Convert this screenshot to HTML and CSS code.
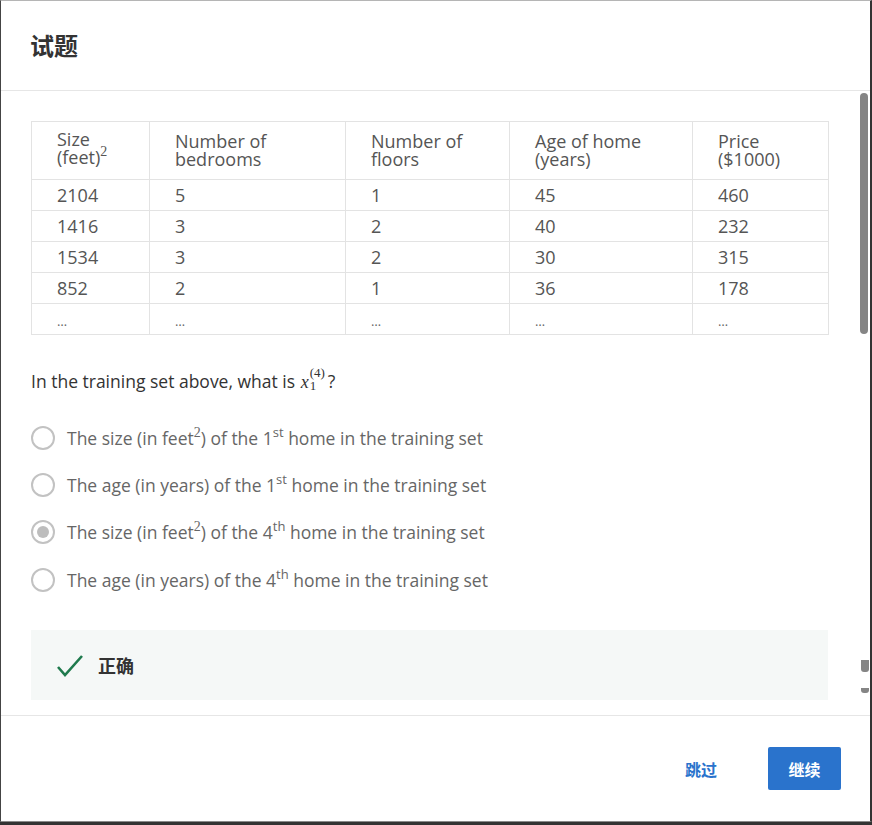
FILE: index.html
```html
<!DOCTYPE html>
<html lang="zh">
<head>
<meta charset="utf-8">
<title>试题</title>
<link rel="stylesheet" href="styles.css">
</head>
<body>
<div class="modal">
  <header class="modal-header">
    <h1 class="title">试题</h1>
  </header>
  <main class="modal-body">
    <div class="content">
      <table class="data">
        <colgroup>
          <col class="c1"><col class="c2"><col class="c3"><col class="c4"><col class="c5">
        </colgroup>
        <thead>
          <tr>
            <th class="first">Size<br>(feet)<sup class="m">2</sup></th>
            <th>Number of<br>bedrooms</th>
            <th>Number of<br>floors</th>
            <th>Age of home<br>(years)</th>
            <th>Price<br>($1000)</th>
          </tr>
        </thead>
        <tbody>
          <tr><td>2104</td><td>5</td><td>1</td><td>45</td><td>460</td></tr>
          <tr><td>1416</td><td>3</td><td>2</td><td>40</td><td>232</td></tr>
          <tr><td>1534</td><td>3</td><td>2</td><td>30</td><td>315</td></tr>
          <tr><td>852</td><td>2</td><td>1</td><td>36</td><td>178</td></tr>
          <tr class="dots"><td>…</td><td>…</td><td>…</td><td>…</td><td>…</td></tr>
        </tbody>
      </table>

      <p class="question">In the training set above, what is <span class="math"><i>x</i><span class="ss"><span class="sup">(4)</span><span class="sub">1</span></span></span>?</p>

      <ul class="options">
        <li class="option"><span class="radio"></span><span>The size (in feet<sup class="m">2</sup>) of the 1<sup>st</sup> home in the training set</span></li>
        <li class="option"><span class="radio"></span><span>The age (in years) of the 1<sup>st</sup> home in the training set</span></li>
        <li class="option"><span class="radio checked"></span><span>The size (in feet<sup class="m">2</sup>) of the 4<sup>th</sup> home in the training set</span></li>
        <li class="option"><span class="radio"></span><span>The age (in years) of the 4<sup>th</sup> home in the training set</span></li>
      </ul>

      <div class="feedback">
        <svg class="check" width="28" height="24" viewBox="0 0 28 24"><path d="M2 13 L9 21 L26 2" fill="none" stroke="#1f7a4d" stroke-width="2.6"/></svg>
        <span class="fb-text">正确</span>
      </div>
    </div>
    <div class="scroll-thumb"></div>
    <div class="scroll-bit b1"></div>
    <div class="scroll-bit b2"></div>
  </main>
  <footer class="modal-footer">
    <a class="skip" href="#">跳过</a>
    <button class="continue" type="button">继续</button>
  </footer>
</div>
</body>
</html>
```

FILE: styles.css
```css
* { box-sizing: border-box; }
html, body { margin: 0; padding: 0; }
body {
  width: 872px;
  height: 825px;
  background: #333;
  font-family: "Open Sans", "Noto Sans CJK SC", sans-serif;
  overflow: hidden;
}
.modal {
  width: 872px;
  height: 822px;
  background: #fff;
  border-top: 1px solid #b5b5b5;
  border-left: 1px solid #444;
  border-right: 2px solid #333;
  border-bottom: 1px solid #8a8a8a;
  display: flex;
  flex-direction: column;
}
.modal-header {
  height: 90px;
  flex: none;
  border-bottom: 1px solid #e6e6e6;
  padding: 0 29px;
  display: flex;
  align-items: center;
}
.title {
  margin: 0;
  padding-bottom: 3px;
  font-family: "Noto Sans CJK SC", sans-serif;
  font-size: 24px;
  font-weight: 700;
  color: #333;
}
.modal-body {
  position: relative;
  height: 625px;
  flex: none;
  overflow: hidden;
  border-bottom: 1px solid #e6e6e6;
}
.content {
  padding: 30px 41px 0 30px;
}
.data {
  width: 797px;
  border-collapse: collapse;
  table-layout: fixed;
  color: #555;
  font-size: 18px;
}
.c1 { width: 118px; }
.c2 { width: 196px; }
.c3 { width: 164px; }
.c4 { width: 183px; }
.c5 { width: 136px; }
.data th, .data td {
  border: 1px solid #e3e3e3;
  padding: 0 0 0 25px;
  text-align: left;
  vertical-align: middle;
  font-weight: 400;
}
.data th {
  height: 58px;
  line-height: 18px;
  padding-bottom: 2px;
}
.data th.first { padding-bottom: 6px; }
.data td {
  height: 31px;
  line-height: 22px;
}
.data .dots td { font-size: 13px; color: #666; padding-top: 4px; }
sup.m {
  font-family: "Liberation Serif", serif;
  font-size: 14px;
  line-height: 0;
  vertical-align: 8px;
}
sup {
  font-size: 13px;
  line-height: 0;
  vertical-align: 8px;
}
.question {
  margin: 32px 0 0 0;
  font-size: 17.5px;
  color: #333;
  line-height: 24px;
}
.math {
  font-family: "Liberation Serif", serif;
  font-size: 18px;
  display: inline-block;
  margin: 0 3px 0 1px;
  line-height: 12px;
}
.math i { font-style: italic; }
.ss {
  display: inline-flex;
  flex-direction: column;
  vertical-align: 11px;
  font-size: 13px;
  line-height: 12px;
  margin-left: 1px;
}
.sub { margin-top: 1px; }
.options {
  list-style: none;
  margin: 21px 0 0 0;
  padding: 0;
}
.option {
  display: flex;
  align-items: center;
  gap: 12px;
  height: 47.3px;
  font-size: 17.5px;
  color: #666;
}
.radio {
  width: 24px;
  height: 24px;
  border-radius: 50%;
  border: 2px solid #c2c2c2;
  flex: none;
  display: flex;
  align-items: center;
  justify-content: center;
}
.radio.checked::after {
  content: "";
  width: 12px;
  height: 12px;
  border-radius: 50%;
  background: #bdbdbd;
}
.feedback {
  margin-top: 27px;
  width: 797px;
  height: 70px;
  background: #f5f8f7;
  display: flex;
  align-items: center;
  padding-left: 25px;
  gap: 14px;
}
.check { display: block; margin-top: 1px; }
.fb-text {
  font-family: "Noto Sans CJK SC", sans-serif;
  font-size: 18px;
  font-weight: 700;
  color: #333;
}
.scroll-thumb {
  position: absolute;
  left: 859px;
  top: 2px;
  width: 8px;
  height: 241px;
  background: #858585;
  border-radius: 4px;
}
.scroll-bit {
  position: absolute;
  left: 860px;
  width: 8px;
  background: #858585;
}
.b1 { top: 569px; height: 12px; border-radius: 0 0 3px 3px; }
.b2 { top: 597px; height: 5px; border-radius: 0 0 3px 3px; }
.modal-footer {
  flex: 1;
  display: flex;
  align-items: center;
  justify-content: flex-end;
  padding: 0 29px 0 0;
}
.skip {
  font-family: "Noto Sans CJK SC", sans-serif;
  font-size: 16px;
  font-weight: 700;
  color: #2a73cc;
  text-decoration: none;
  margin-right: 51px;
}
.continue {
  width: 73px;
  height: 43px;
  border: none;
  border-radius: 2px;
  background: #2a73cc;
  color: #fff;
  font-family: "Noto Sans CJK SC", sans-serif;
  font-size: 16px;
  font-weight: 700;
  padding: 0;
}
```
